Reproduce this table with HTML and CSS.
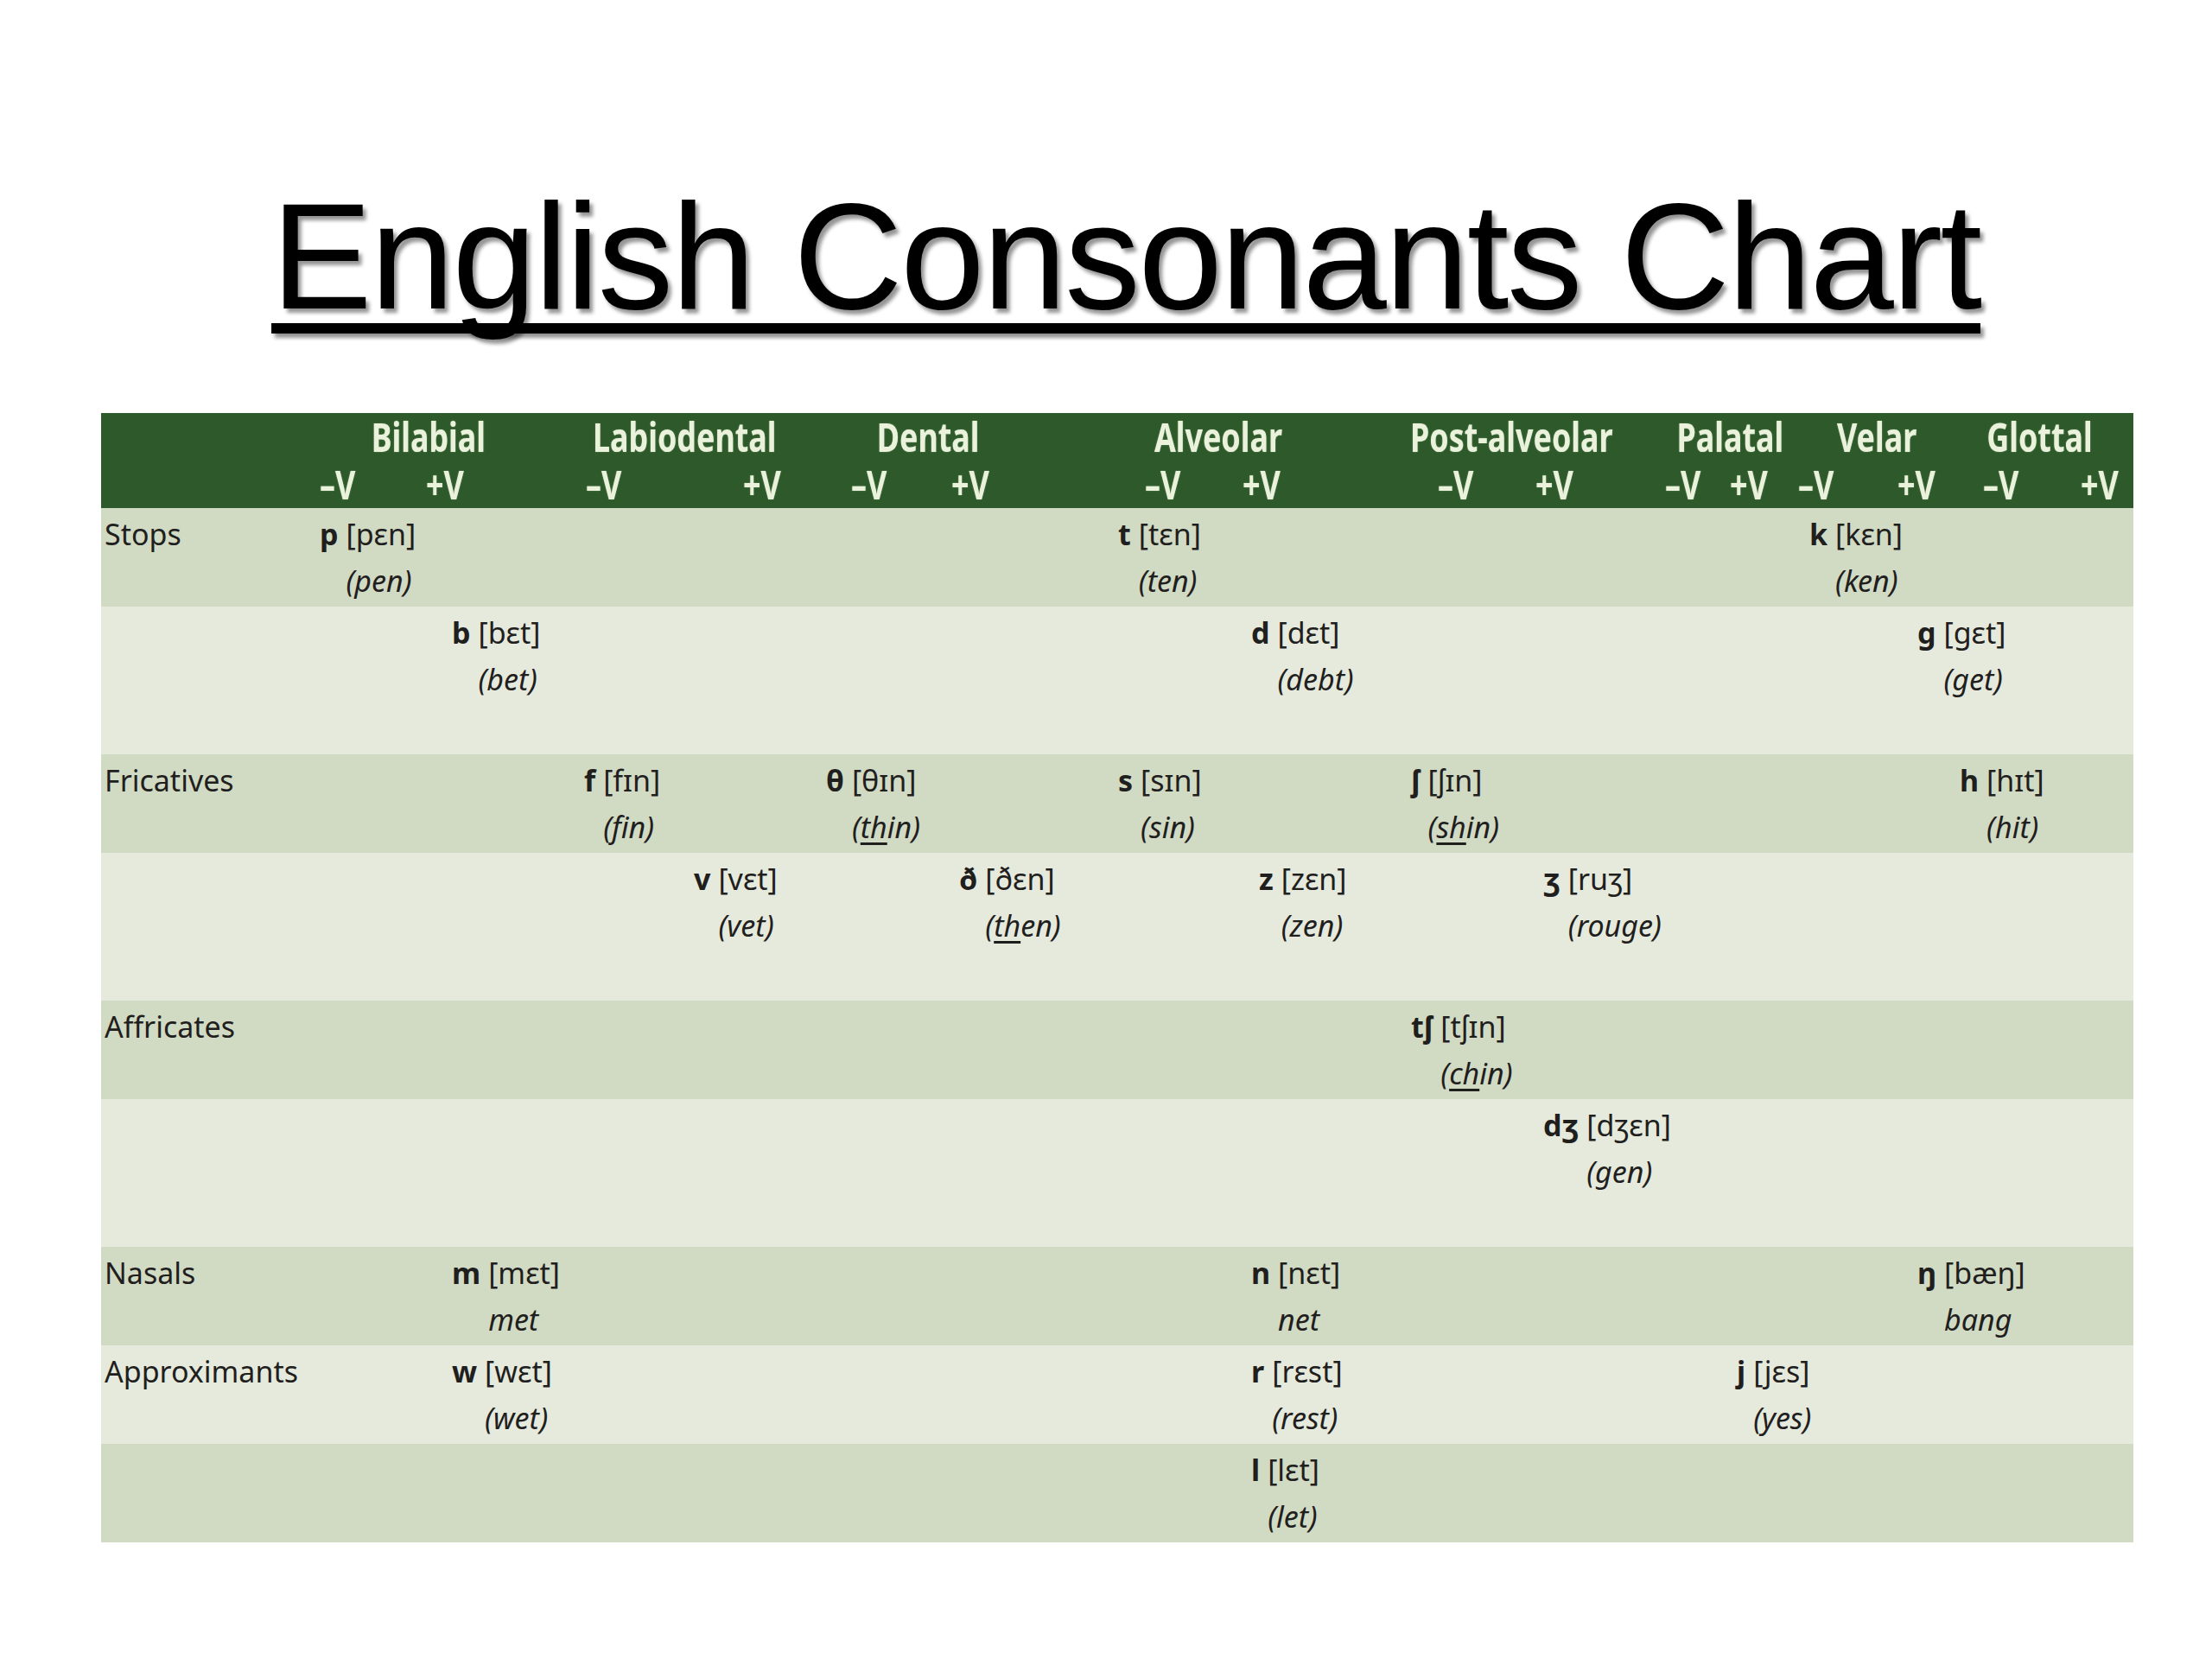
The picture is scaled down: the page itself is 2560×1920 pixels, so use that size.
FILE: index.html
```html
<!DOCTYPE html>
<html lang="en">
<head>
<meta charset="utf-8">
<title>English Consonants Chart</title>
<link rel="stylesheet" href="styles.css">
</head>
<body>
<main class="slide">
  <h1 class="title">English Consonants Chart</h1>

  <section class="chart">
    <div class="head">
      <div class="groups">
        <div><span>Bilabial</span></div>
        <div><span>Labiodental</span></div>
        <div><span>Dental</span></div>
        <div><span>Alveolar</span></div>
        <div><span>Post-alveolar</span></div>
        <div><span>Palatal</span></div>
        <div><span>Velar</span></div>
        <div><span>Glottal</span></div>
      </div>
      <div class="voicing">
        <div><span>–V</span></div><div><span>+V</span></div>
        <div><span>–V</span></div><div><span>+V</span></div>
        <div><span>–V</span></div><div><span>+V</span></div>
        <div><span>–V</span></div><div><span>+V</span></div>
        <div><span>–V</span></div><div><span>+V</span></div>
        <div><span>–V</span></div><div><span>+V</span></div>
        <div><span>–V</span></div><div><span>+V</span></div>
        <div><span>–V</span></div><div><span>+V</span></div>
      </div>
    </div>

    <div class="row dark">
      <div class="label">Stops</div>
      <div class="cell c1"><b>p</b><span class="ex"><span>[pɛn]</span><i>(pen)</i></span></div>
      <div class="cell c7"><b>t</b><span class="ex"><span>[tɛn]</span><i>(ten)</i></span></div>
      <div class="cell c12"><b>k</b><span class="ex"><span>[kɛn]</span><i>(ken)</i></span></div>
    </div>
    <div class="row light tall">
      <div class="cell c2"><b>b</b><span class="ex"><span>[bɛt]</span><i>(bet)</i></span></div>
      <div class="cell c8"><b>d</b><span class="ex"><span>[dɛt]</span><i>(debt)</i></span></div>
      <div class="cell c13"><b>g</b><span class="ex"><span>[gɛt]</span><i>(get)</i></span></div>
    </div>

    <div class="row dark">
      <div class="label">Fricatives</div>
      <div class="cell c3"><b>f</b><span class="ex"><span>[fɪn]</span><i>(fin)</i></span></div>
      <div class="cell c5"><b>θ</b><span class="ex"><span>[θɪn]</span><i>(<u>th</u>in)</i></span></div>
      <div class="cell c7"><b>s</b><span class="ex"><span>[sɪn]</span><i>(sin)</i></span></div>
      <div class="cell c9"><b>ʃ</b><span class="ex"><span>[ʃɪn]</span><i>(<u>sh</u>in)</i></span></div>
      <div class="cell c14"><b>h</b><span class="ex"><span>[hɪt]</span><i>(hit)</i></span></div>
    </div>
    <div class="row light tall">
      <div class="cell c4"><b>v</b><span class="ex"><span>[vɛt]</span><i>(vet)</i></span></div>
      <div class="cell c6"><b>ð</b><span class="ex"><span>[ðɛn]</span><i>(<u>th</u>en)</i></span></div>
      <div class="cell c8 nudge"><b>z</b><span class="ex"><span>[zɛn]</span><i>(zen)</i></span></div>
      <div class="cell c10"><b>ʒ</b><span class="ex"><span>[ruʒ]</span><i>(rouge)</i></span></div>
    </div>

    <div class="row dark">
      <div class="label">Affricates</div>
      <div class="cell c9"><b>tʃ</b><span class="ex"><span>[tʃɪn]</span><i>(<u>ch</u>in)</i></span></div>
    </div>
    <div class="row light tall">
      <div class="cell c10"><b>dʒ</b><span class="ex"><span>[dʒɛn]</span><i>(gen)</i></span></div>
    </div>

    <div class="row dark">
      <div class="label">Nasals</div>
      <div class="cell c2"><b>m</b><span class="ex"><span>[mɛt]</span><i>met</i></span></div>
      <div class="cell c8"><b>n</b><span class="ex"><span>[nɛt]</span><i>net</i></span></div>
      <div class="cell c13"><b>ŋ</b><span class="ex"><span>[bæŋ]</span><i>bang</i></span></div>
    </div>
    <div class="row light">
      <div class="label">Approximants</div>
      <div class="cell c2"><b>w</b><span class="ex"><span>[wɛt]</span><i>(wet)</i></span></div>
      <div class="cell c8"><b>r</b><span class="ex"><span>[rɛst]</span><i>(rest)</i></span></div>
      <div class="cell c11"><b>j</b><span class="ex"><span>[jɛs]</span><i>(yes)</i></span></div>
    </div>
    <div class="row dark">
      <div class="cell c8"><b>l</b><span class="ex"><span>[lɛt]</span><i>(let)</i></span></div>
    </div>
  </section>
</main>
</body>
</html>
```

FILE: styles.css
```css
* {
  box-sizing: border-box;
  margin: 0;
  padding: 0;
}

html,
body {
  background: #ffffff;
}

body {
  width: 2560px;
  height: 1920px;
  overflow: hidden;
  font-family: "Noto Sans", "DejaVu Sans", sans-serif;
  color: #1f201d;
}

.slide {
  padding-top: 209px;
}

/* ---------- title ---------- */
.title {
  font-family: "Liberation Sans", Arial, sans-serif;
  font-weight: 400;
  font-size: 175px;
  line-height: 175px;
  letter-spacing: -2.3px;
  text-align: center;
  padding-left: 46px;
  color: #000000;
  text-decoration: underline;
  text-decoration-thickness: 12px;
  text-underline-offset: 17px;
  text-decoration-skip-ink: none;
  text-shadow: 4px 5px 4px rgba(0, 0, 0, 0.42);
}

/* ---------- chart ---------- */
.chart {
  margin: 94px 0 0 117px;
  width: 2352px;
}

.head {
  background: #2e5a2b;
  color: #eaf2dc;
  font-weight: 700;
  font-size: 46px;
  line-height: 55px;
  height: 110px;
  text-shadow: 0 0 2px rgba(220, 240, 200, 0.35);
}

.groups {
  display: grid;
  grid-template-columns:
    313px 131px 127px 209px 120px 115px 204px 148px 150px
    230px 79px 119px 65px 91px 81px 123px 47px;
}

.groups > div {
  grid-row: 1;
  display: flex;
  justify-content: center;
  white-space: nowrap;
}

.groups > div:nth-child(1) { grid-column: 2; }
.groups > div:nth-child(2) { grid-column: 4; }
.groups > div:nth-child(3) { grid-column: 6; }
.groups > div:nth-child(4) { grid-column: 8; }
.groups > div:nth-child(5) { grid-column: 10; }
.groups > div:nth-child(6) { grid-column: 12; }
.groups > div:nth-child(7) { grid-column: 14; }
.groups > div:nth-child(8) { grid-column: 16; }

.groups span {
  display: inline-block;
  flex-shrink: 0;
  transform: scaleX(0.78);
  transform-origin: center center;
}

.voicing {
  display: grid;
  grid-template-columns:
    253px 123px 185px 182px 125px 116px 224px 113px 226px
    113px 150px 75px 79px 115px 99px 113px 61px;
}

.voicing > div {
  white-space: nowrap;
}

.voicing > div:first-child {
  grid-column: 2;
}

.voicing span {
  display: inline-block;
  transform: scaleX(0.78);
  transform-origin: left center;
}

/* ---------- body rows ---------- */
.row {
  display: grid;
  grid-template-columns:
    253px 153px 153px 127px 153px 154px 184px 154px 185px
    153px 224px 84px 125px 49px 201px;
  height: 114px;
  padding-top: 3px;
  font-size: 34px;
  line-height: 54px;
}

.row > * {
  grid-row: 1;
}

.dark {
  background: #d1dac3;
}

.light {
  background: #e5eadc;
}

.tall {
  height: 171px;
}

.label {
  grid-column: 1;
  padding-left: 4px;
  white-space: nowrap;
}

.cell {
  display: flex;
  gap: 9px;
  white-space: nowrap;
}

.cell b {
  font-weight: 700;
  flex-shrink: 0;
}

.ex {
  display: flex;
  flex-direction: column;
  flex-shrink: 0;
}

.ex i {
  font-style: italic;
}

.ex u {
  text-decoration-thickness: 3px;
  text-underline-offset: 5px;
}

.nudge {
  padding-left: 9px;
}

.c1 { grid-column: 2; }
.c2 { grid-column: 3; }
.c3 { grid-column: 4; }
.c4 { grid-column: 5; }
.c5 { grid-column: 6; }
.c6 { grid-column: 7; }
.c7 { grid-column: 8; }
.c8 { grid-column: 9; }
.c9 { grid-column: 10; }
.c10 { grid-column: 11; }
.c11 { grid-column: 12; }
.c12 { grid-column: 13; }
.c13 { grid-column: 14; }
.c14 { grid-column: 15; }
```
